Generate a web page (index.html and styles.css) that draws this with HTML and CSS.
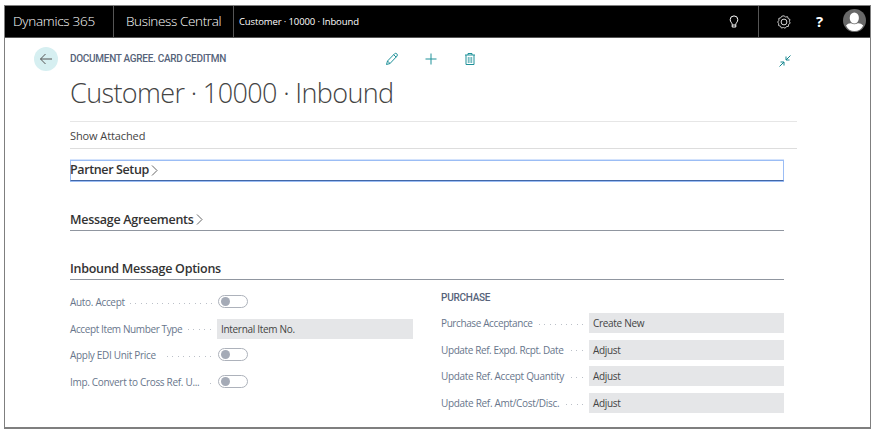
FILE: index.html
```html
<!DOCTYPE html>
<html lang="en">
<head>
<meta charset="utf-8">
<title>Customer · 10000 · Inbound</title>
<link rel="stylesheet" href="styles.css">
</head>
<body>
<div class="window">
  <header class="topbar">
    <div class="brand"><span>Dynamics 365</span></div>
    <div class="product"><span>Business Central</span></div>
    <div class="crumb"><span>Customer · 10000 · Inbound</span></div>
    <div class="tip"><svg width="12" height="14" viewBox="0 0 12 14" fill="none" stroke="#fff"><path d="M4.200 9.500C4.200 7.800 2.200 7 2.200 4.700a3.800 3.800 0 0 1 7.600 0C9.800 7 7.800 7.800 7.800 9.500V12H4.200zM4.200 10h3.600"/></svg></div>
    <div class="tools">
      <svg class="gear" width="14" height="14" viewBox="0 0 14 14" fill="none" stroke="#ddd"><path d="M7 .800 8.600 2 10.600 1.700 11.200 3.600 13 4.500 12.400 6.400 13.200 8.200 11.600 9.400 11.400 11.400 9.400 11.600 8.200 13.200 6.400 12.500 4.400 13 3.500 11.200 1.600 10.600 1.700 8.600.700 7 1.900 5.400 1.800 3.400 3.700 2.900 4.800 1.200z" stroke-width=".9"/><circle cx="7" cy="7" r="2.900"/></svg>
      <span class="help">?</span>
      <svg class="avatar" width="23" height="23" viewBox="0 0 23 23"><circle cx="11.500" cy="11.500" r="11.500" fill="#686868"/><ellipse cx="11.300" cy="9" rx="4.600" ry="5.500" fill="#fff"/><path d="M3 16.500Q5 14 8 14.200q3.300 2.300 6.800 0 3.200-.2 5.400 2.300Q17.500 22 11.500 22T3 16.500z" fill="#fff"/></svg>
    </div>
  </header>
  <main class="page">
    <div class="heading">
      <div class="back"><svg width="14" height="12" viewBox="0 0 14 12" fill="none" stroke="#555"><path d="M13 6H1.500M6.500 1 1.500 6l5 5"/></svg></div>
      <div class="doc">DOCUMENT AGREE. CARD CEDITMN</div>
      <div class="actions">
        <svg width="14" height="14" viewBox="0 0 14 14" fill="none" stroke="#1f9199"><path d="M1.500 12.500l1-3.500 7-7.200q1.200-1 2.300 0t.2 2.300L5 11.500zM2.500 9 5 11.500M8.700 2.700l2.500 2.500"/></svg>
        <svg width="14" height="14" viewBox="0 0 14 14" fill="none" stroke="#1f9199"><path d="M7 1.500v11M1.500 7h11"/></svg>
        <svg width="14" height="14" viewBox="0 0 14 14" fill="none" stroke="#1f9199"><path d="M2 3h10M5 3V1.500h4V3M3 3v9.500h8V3"/><path d="M5.300 5v6M7 5v6M8.700 5v6" stroke-opacity=".75"/></svg>
      </div>
      <svg class="collapse" width="14" height="14" viewBox="0 0 14 14" fill="none" stroke="#168790"><path d="M12.500 1.500 8 6M8 2.500V6h3.500M1.500 12.500 6 8M2.500 8H6v3.500"/></svg>
    </div>
    <h1>Customer · 10000 · Inbound</h1>
    <div class="menu"><span>Show Attached</span></div>
    <section class="fasttab focused"><h2>Partner Setup</h2><svg width="7" height="11" viewBox="0 0 7 11" fill="none" stroke="#666"><path d="M1 .500 6 5.500l-5 5"/></svg></section>
    <section class="fasttab agreements"><h2>Message Agreements</h2><svg width="7" height="11" viewBox="0 0 7 11" fill="none" stroke="#666"><path d="M1 .500 6 5.500l-5 5"/></svg></section>
    <section class="fasttab options"><h2>Inbound Message Options</h2></section>
    <div class="columns">
      <div class="column left">
        <div class="field"><label>Auto. Accept</label><i class="dots d15"></i><b class="switch"></b></div>
        <div class="field"><label class="tight">Accept Item Number Type</label><i class="dots d5"></i><div class="value">Internal Item No.</div></div>
        <div class="field"><label>Apply EDI Unit Price</label><i class="dots d9"></i><b class="switch"></b></div>
        <div class="field"><label>Imp. Convert to Cross Ref. U...</label><i class="dots d1"></i><b class="switch"></b></div>
      </div>
      <div class="column right">
        <h3>PURCHASE</h3>
        <div class="field"><label class="tight">Purchase Acceptance</label><i class="dots d9"></i><div class="value">Create New</div></div>
        <div class="field"><label class="tight">Update Ref. Expd. Rcpt. Date</label><i class="dots d3"></i><div class="value">Adjust</div></div>
        <div class="field"><label>Update Ref. Accept Quantity</label><i class="dots d3"></i><div class="value">Adjust</div></div>
        <div class="field"><label>Update Ref. Amt/Cost/Disc.</label><i class="dots d4"></i><div class="value">Adjust</div></div>
      </div>
    </div>
  </main>
</div>
</body>
</html>
```
FILE: styles.css
```css
* { box-sizing: border-box; }
body { margin: 0; padding: 5px 0 0 4px; background: #fff; font-family: "Open Sans", "Noto Sans", sans-serif; color: #333; white-space: nowrap; overflow: hidden; }
svg { display: block; flex: none; }
.window { width: 867px; height: 424px; border: 1px solid #7f7f7f; border-bottom-width: 2px; }
.topbar { display: flex; height: 32px; background: #000; color: #fff; border-bottom: 1px solid #555; }
.topbar > div { display: flex; align-items: center; }
.topbar span { position: relative; top: -0.5px; }
.brand { width: 109px; padding-left: 8px; font-size: 13.5px; font-weight: 300; letter-spacing: -0.27px; border-right: 1px solid #555; }
.product { width: 120px; padding-left: 12px; font-size: 13.5px; font-weight: 300; letter-spacing: -0.36px; border-right: 1px solid #555; }
.crumb { padding-left: 5px; font-size: 9.5px; letter-spacing: -0.12px; flex: 1; }
.tip { width: 31px; border-right: 1px solid #555; }
.tools { width: 111px; padding-left: 18px; }
.help { margin-left: 25px; width: 10px; font-size: 15px; font-weight: 700; }
.avatar { margin: -2px 0 0 17px; }
.page { padding: 0 0 0 65px; }
.heading { display: flex; align-items: center; height: 41px; margin-left: -36px; }
.back { width: 24px; height: 24px; border-radius: 50%; background: #d6eff1; display: flex; align-items: center; justify-content: center; }
.doc { margin-left: 12px; width: 315px; font: 500 10px Roboto, sans-serif; letter-spacing: -0.29px; color: #56637a; }
.actions { display: flex; gap: 25px; }
.collapse { margin: 5px 0 0 301px; }
h1, h2, h3 { margin: 0; font-weight: 400; }
h1 { height: 42px; line-height: 28px; font-size: 27px; font-weight: 300; letter-spacing: -0.63px; color: #444; }
.menu { width: 727px; height: 28px; border-top: 1px solid #e6e6e6; border-bottom: 1px solid #ddd; display: flex; align-items: center; font-size: 11px; letter-spacing: -0.1px; color: #444; }
.fasttab { display: flex; align-items: center; width: 714px; height: 22px; border-bottom: 1px solid #9096a0; }
.fasttab h2 { font-size: 12.5px; font-weight: 600; letter-spacing: -0.28px; }
.fasttab svg { margin-left: 2px; }
.focused { height: 21px; margin-top: 11px; border: 1px solid #9bbdf5; border-bottom: 1px solid #4267a7; box-shadow: 0 1px #9bbdf5, 0 -1px #d4e3fc; }
.focused h2 { margin-left: -1px; letter-spacing: -0.38px; line-height: 16px; padding-bottom: 1px; }
.agreements { margin-top: 28px; }
.options { margin-top: 27px; }
.columns { display: flex; width: 714px; }
.column { display: flex; flex-direction: column; }
.left { width: 343px; margin-right: 28px; padding-top: 12px; gap: 7px; }
.right { width: 343px; padding-top: 10px; gap: 7px; }
h3 { font: 500 10px/16px Roboto, sans-serif; letter-spacing: -0.25px; color: #56637a; height: 16px; }
.field { display: flex; align-items: center; height: 20px; font-size: 10px; letter-spacing: -0.31px; color: #68768c; }
.field + .field { margin-top: -0.300px; }
.tight { letter-spacing: -0.39px; }
.dots { flex: none; height: 1px; margin: 2px 5px 0 auto; background: repeating-linear-gradient(90deg, #bbc0c8 0 1px, transparent 1px 5.400px); }
.d15 { width: 82px; } .d9 { width: 45px; } .d5 { width: 24px; } .d4 { width: 18px; } .d3 { width: 13px; } .d1 { width: 2px; }
.value { flex: none; width: 195px; height: 20px; line-height: 20px; padding-left: 4px; background: #e5e6e8; color: #444; }
.left .value { width: 196px; }
.left .field .switch { margin-right: 165px; }
.switch { flex: none; width: 30px; height: 13px; margin: -1px 0 0 1px; border: 1px solid #adb2bb; border-radius: 7px; padding: 1px 2px; }
.switch::before { content: ""; display: block; width: 9px; height: 9px; border-radius: 50%; background: #a5abb7; }
```
